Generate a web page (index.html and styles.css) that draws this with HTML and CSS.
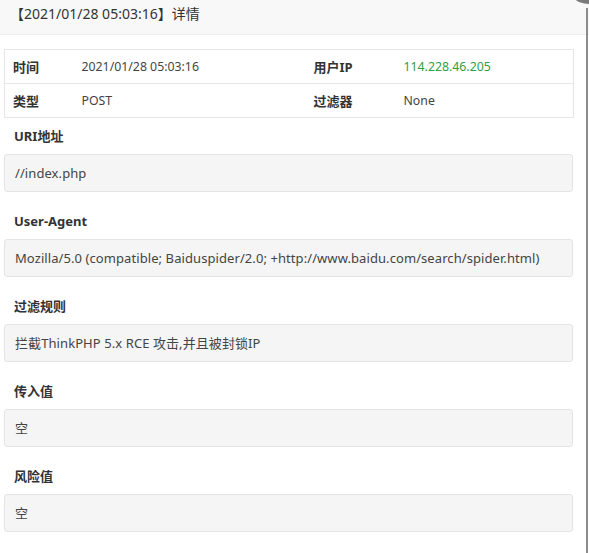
FILE: index.html
```html
<!DOCTYPE html>
<html lang="zh-CN">
<head>
<meta charset="utf-8">
<title>详情</title>
<link rel="stylesheet" href="styles.css">
</head>
<body>
<div class="layer">
  <div class="layer-title">【2021/01/28 05:03:16】详情</div>
  <span class="layer-close"></span>
  <span class="layer-edge"></span>
  <div class="layer-content">
    <table class="info">
      <colgroup>
        <col class="c1"><col class="c2"><col class="c3"><col class="c4">
      </colgroup>
      <tbody>
        <tr>
          <th>时间</th><td>2021/01/28 05:03:16</td>
          <th>用户IP</th><td class="green">114.228.46.205</td>
        </tr>
        <tr>
          <th>类型</th><td>POST</td>
          <th>过滤器</th><td>None</td>
        </tr>
      </tbody>
    </table>

    <div class="field first">
      <div class="field-label">URI地址</div>
      <div class="field-box">//index.php</div>
    </div>
    <div class="field">
      <div class="field-label">User-Agent</div>
      <div class="field-box">Mozilla/5.0 (compatible; Baiduspider/2.0; +http://www.baidu.com/search/spider.html)</div>
    </div>
    <div class="field">
      <div class="field-label">过滤规则</div>
      <div class="field-box">拦截ThinkPHP 5.x RCE 攻击,并且被封锁IP</div>
    </div>
    <div class="field">
      <div class="field-label">传入值</div>
      <div class="field-box">空</div>
    </div>
    <div class="field">
      <div class="field-label">风险值</div>
      <div class="field-box">空</div>
    </div>
  </div>
</div>
</body>
</html>
```

FILE: styles.css
```css
html, body {
  margin: 0;
  padding: 0;
  background: #fff;
}
body {
  font-family: "Noto Sans", "Noto Sans CJK SC", sans-serif;
  color: #333;
  font-size: 13px;
  width: 589px;
  height: 553px;
  overflow: hidden;
}
.layer {
  position: relative;
  height: 553px;
}
.layer-title {
  height: 34px;
  line-height: 28px;
  padding-left: 10px;
  background: #f8f8f8;
  border-bottom: 1px solid #eee;
  font-size: 14px;
  color: #333;
}
.layer-close {
  position: absolute;
  left: 565px;
  top: -44px;
  width: 48px;
  height: 48px;
  border-radius: 50%;
  background: #7a7a7a;
}
.layer-edge {
  position: absolute;
  left: 586px;
  top: 8px;
  width: 2px;
  bottom: 0;
  background: #8c8c8c;
}
.layer-content {
  padding: 14px 16px 0 4px;
}
.info {
  width: 569px;
  border-collapse: collapse;
  table-layout: fixed;
  border: 1px solid #e6e6e6;
}
.c1 { width: 69px; }
.c2 { width: 232px; }
.c3 { width: 90px; }
.c4 { width: 178px; }
.info th, .info td {
  height: 33px;
  padding: 0 8px;
  text-align: left;
  border-bottom: 1px solid #e6e6e6;
  line-height: 20px;
}
.info th {
  font-size: 13px;
  font-weight: 700;
  color: #333;
}
.info td {
  font-size: 12.3px;
  color: #444;
}
.info td.green {
  color: #2f9e44;
}
.field-label {
  padding: 9px 10px 0;
  line-height: 20px;
  margin-bottom: 8px;
  font-weight: 700;
  font-size: 13px;
  color: #333;
}
.field.first .field-label {
  padding-top: 8px;
}
.field-box {
  height: 36px;
  line-height: 36px;
  padding: 0 10px;
  background: #f5f5f5;
  border: 1px solid #e4e4e4;
  border-radius: 3px;
  margin-bottom: 10px;
  color: #444;
  letter-spacing: 0.08px;
  white-space: nowrap;
  overflow: hidden;
}
```
